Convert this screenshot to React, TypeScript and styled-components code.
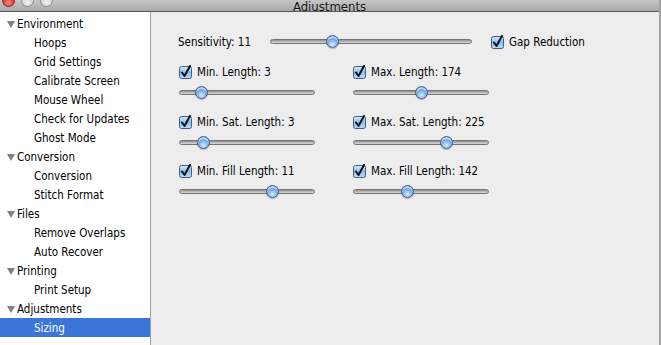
import * as React from 'react';
import styled, { createGlobalStyle } from 'styled-components';

const GlobalStyle = createGlobalStyle`
    html, body {
        margin: 0;
        padding: 0;
        background: #ededed;
        overflow: hidden;
    }
    body {
        font-family: "Lucida Grande", "DejaVu Sans Condensed", "DejaVu Sans", sans-serif;
        font-size: 11.5px;
        color: #000;
    }
`;

const Window = styled.div`
    width: 661px;
    height: 345px;
    display: flex;
    flex-direction: column;
    overflow: hidden;
    box-sizing: border-box;
    border-right: 2px solid #a3a3a3;
    background: #ededed;
`;

const TitleBar = styled.div`
    height: 11px;
    flex: none;
    display: grid;
    grid-template-columns: 1fr auto 1fr;
    align-items: end;
    background: linear-gradient(#c6c6c6, #a9a9a9);
    border-bottom: 1px solid #585858;
    overflow: hidden;
`;

const Lights = styled.div`
    display: flex;
    gap: 6px;
    padding-left: 2px;
    align-self: start;
    margin-top: -6px;
`;

const Light = styled.span<{ $red?: boolean }>`
    width: 13px;
    height: 13px;
    border-radius: 50%;
    box-sizing: border-box;
    border: 1px solid ${p => (p.$red ? '#8a1d14' : '#8c8c8c')};
    background: ${p =>
        p.$red
            ? 'radial-gradient(circle at 50% 70%, #ff8e80, #d8362a 60%, #a3190f)'
            : 'radial-gradient(circle at 50% 70%, #f4f4f4, #d2d2d2 60%, #b0b0b0)'};
`;

const Title = styled.div`
    font-size: 13px;
    line-height: 13px;
    margin-bottom: 1px;
    color: #111;
    text-shadow: 0 1px 0 rgba(255, 255, 255, 0.4);
`;

const Body = styled.div`
    flex: 1;
    display: flex;
    min-height: 0;
`;

const Sidebar = styled.ul`
    width: 150px;
    flex: none;
    margin: 0;
    padding: 2px 0 0;
    list-style: none;
    background: #fff;
    border-right: 1px solid #a2a2a2;
`;

const Item = styled.li<{ $child?: boolean; $selected?: boolean }>`
    height: 19px;
    display: flex;
    align-items: center;
    padding-left: ${p => (p.$child ? '34px' : '7px')};
    background: ${p => (p.$selected ? '#3a75d7' : 'transparent')};
    color: ${p => (p.$selected ? '#fff' : '#000')};
    white-space: nowrap;
`;

const Disclosure = styled.span`
    width: 0;
    height: 0;
    border-left: 4.5px solid transparent;
    border-right: 4.5px solid transparent;
    border-top: 7px solid #808080;
    margin-right: 2px;
    margin-top: 2px;
`;

const Panel = styled.div`
    flex: 1;
    padding: 22px 0 0 27px;
`;

const TopRow = styled.div`
    display: flex;
    align-items: center;
    height: 16px;
`;

const SensLabel = styled.span`
    width: 92px;
    flex: none;
`;

const Grid = styled.div`
    display: grid;
    grid-template-columns: 174px 174px;
    row-gap: 13.5px;
    margin-top: 14px;
`;

const Cell = styled.div`
    display: flex;
    flex-direction: column;
    gap: 6px;
    padding-left: 1px;
`;

const CheckLine = styled.label<{ $gap?: number }>`
    display: flex;
    align-items: center;
    height: 16px;
    gap: 5px;
    margin-left: ${p => p.$gap || 0}px;
`;

const Track = styled.div<{ $w: number }>`
    position: relative;
    width: ${p => p.$w}px;
    height: 14px;
    flex: none;
    &::before {
        content: '';
        position: absolute;
        left: 0;
        right: 0;
        top: 4px;
        height: 5px;
        box-sizing: border-box;
        border-radius: 3px;
        border: 1px solid #757575;
        background: linear-gradient(#8f8f8f, #bdbdbd 60%, #dadada);
    }
`;

const Knob = styled.span`
    position: absolute;
    top: 0;
    width: 13px;
    height: 13px;
    box-sizing: border-box;
    border-radius: 50%;
    border: 1px solid #3d5f8f;
    background: radial-gradient(circle at 50% 75%, #d6ecff 0%, #7eb1ea 45%, #3f78c8 80%);
    box-shadow: inset 0 2px 1px rgba(255, 255, 255, 0.7), 0 1px 1px rgba(0, 0, 0, 0.25);
`;

function Slider({ width, value }: { width: number; value: number }) {
    return (
        <Track $w={width}>
            <Knob style={{ left: Math.round(value * (width - 13)) }} />
        </Track>
    );
}

function CheckBox() {
    return (
        <svg width="13" height="14" viewBox="0 0 13 14">
            <defs>
                <linearGradient id="cb" x1="0" y1="0" x2="0" y2="1">
                    <stop offset="0" stopColor="#d9ecff" />
                    <stop offset="0.5" stopColor="#8cbcf0" />
                    <stop offset="1" stopColor="#b9dcff" />
                </linearGradient>
            </defs>
            <rect x="0.5" y="1.5" width="12" height="12" rx="2" fill="url(#cb)" stroke="#3f5e86" />
            <path d="M3 7.5 L5.5 11 L11 1" fill="none" stroke="#111" strokeWidth="2" strokeLinecap="round" strokeLinejoin="round" />
        </svg>
    );
}

const tree = [
    { label: 'Environment', children: ['Hoops', 'Grid Settings', 'Calibrate Screen', 'Mouse Wheel', 'Check for Updates', 'Ghost Mode'] },
    { label: 'Conversion', children: ['Conversion', 'Stitch Format'] },
    { label: 'Files', children: ['Remove Overlaps', 'Auto Recover'] },
    { label: 'Printing', children: ['Print Setup'] },
    { label: 'Adjustments', children: ['Sizing'] },
];

const controls = [
    { label: 'Min. Length: 3', value: 0.134 },
    { label: 'Max. Length: 174', value: 0.508 },
    { label: 'Min. Sat. Length: 3', value: 0.145 },
    { label: 'Max. Sat. Length: 225', value: 0.706 },
    { label: 'Min. Fill Length: 11', value: 0.709 },
    { label: 'Max. Fill Length: 142', value: 0.389 },
];

export default function App() {
    return (
        <Window>
            <GlobalStyle />
            <TitleBar>
                <Lights>
                    <Light $red />
                    <Light />
                    <Light />
                </Lights>
                <Title>Adjustments</Title>
                <span />
            </TitleBar>
            <Body>
                <Sidebar>
                    {tree.map(group => (
                        <React.Fragment key={group.label}>
                            <Item><Disclosure />{group.label}</Item>
                            {group.children.map(c => (
                                <Item key={c} $child $selected={c === 'Sizing'}>{c}</Item>
                            ))}
                        </React.Fragment>
                    ))}
                </Sidebar>
                <Panel>
                    <TopRow>
                        <SensLabel>Sensitivity: 11</SensLabel>
                        <Slider width={202} value={0.297} />
                        <CheckLine $gap={19}><CheckBox />Gap Reduction</CheckLine>
                    </TopRow>
                    <Grid>
                        {controls.map(c => (
                            <Cell key={c.label}>
                                <CheckLine><CheckBox />{c.label}</CheckLine>
                                <Slider width={136} value={c.value} />
                            </Cell>
                        ))}
                    </Grid>
                </Panel>
            </Body>
        </Window>
    );
}
